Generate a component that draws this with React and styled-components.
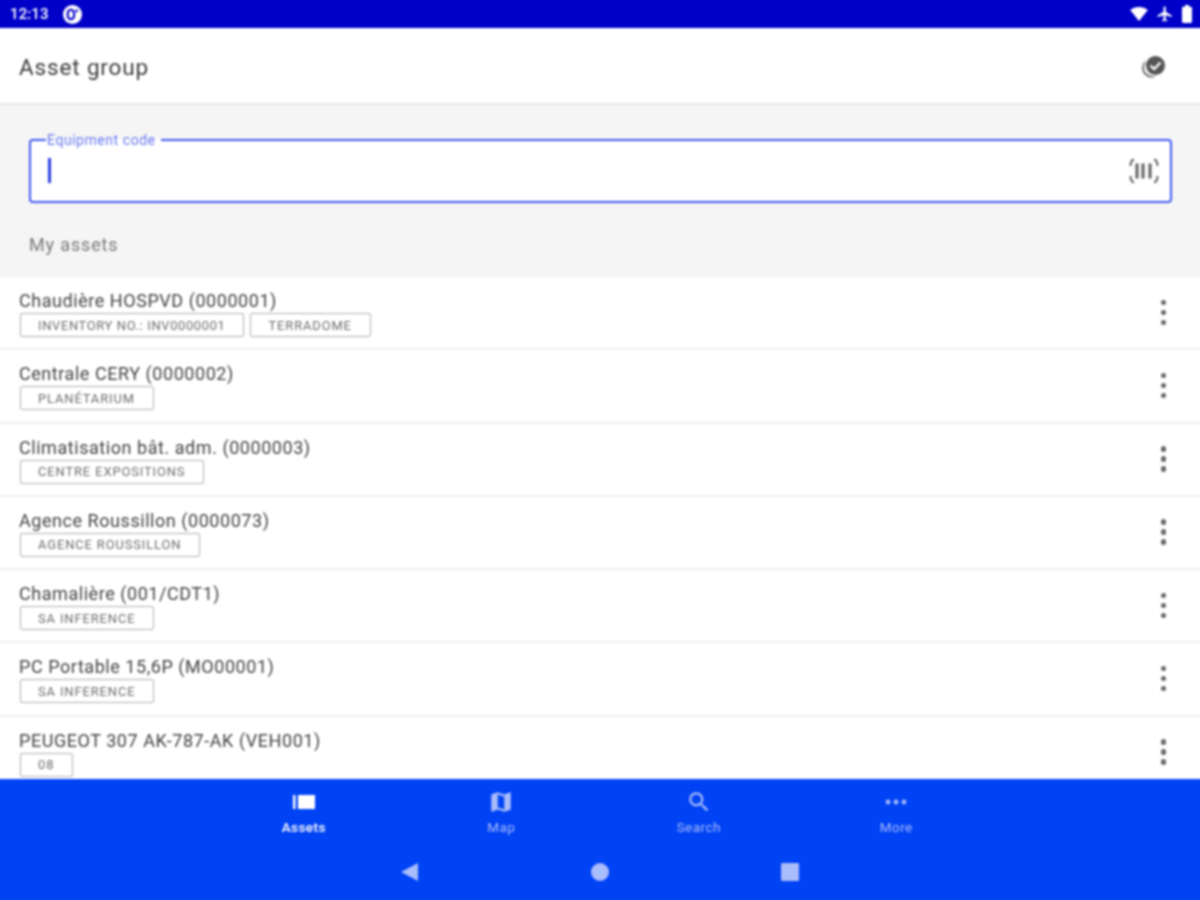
import React from "react";
import styled, { createGlobalStyle } from "styled-components";

const Global = createGlobalStyle`
  html, body { margin: 0; padding: 0; background: #fff; overflow: hidden; height: 100%; }
  body { font-family: Roboto, "Liberation Sans", sans-serif; }
  * { box-sizing: border-box; }
`;

/* The screen bleeds 8px past the window on every side so the soft focus never fades at the edges. */
const Screen = styled.div`
  width: 1216px;
  height: 916px;
  margin: -8px;
  display: flex;
  flex-direction: column;
  overflow: hidden;
  background: #fff;
  filter: blur(0.9px);
`;

const StatusBar = styled.div`
  height: 36px;
  flex: none;
  background: #0000c8;
  color: #fff;
  display: flex;
  align-items: center;
  padding: 8px 16px 0 18px;
`;
const Time = styled.span`
  font-size: 15px;
  font-weight: 500;
  letter-spacing: 0.1px;
`;
const Notice = styled.svg`
  width: 19px;
  height: 19px;
  margin-left: 14px;
`;
const StatusIcons = styled.div`
  margin-left: auto;
  display: flex;
  align-items: center;
  gap: 8px;
`;

const Header = styled.header`
  height: 77px;
  flex: none;
  background: #fff;
  border-bottom: 2px solid #e6e6e6;
  display: flex;
  align-items: center;
  justify-content: space-between;
  padding: 2px 41px 0 27px;
`;
const Title = styled.h1`
  margin: 0;
  font-size: 22.5px;
  font-weight: 400;
  letter-spacing: 0.85px;
  color: #3c3c3c;
`;

const SearchArea = styled.section`
  height: 172px;
  flex: none;
  background: #f5f5f5;
  padding: 0 36px 0 37px;
  display: flex;
  flex-direction: column;
`;
const Field = styled.fieldset`
  margin: 26px 0 0;
  padding: 0 11px 0 17px;
  height: 72px;
  border: 2px solid #4058f0;
  border-radius: 4px;
  background: #fff;
`;
const Legend = styled.legend`
  padding: 2px 5px 0 1px;
  margin-left: -2px;
  font-size: 14px;
  line-height: 15px;
  letter-spacing: 0.55px;
  color: #6578f0;
`;
const FieldBody = styled.div`
  height: 47px;
  margin-top: -1px;
  display: flex;
  align-items: center;
  justify-content: space-between;
`;
const Caret = styled.span`
  display: block;
  width: 3px;
  height: 25px;
  background: #2a3fe0;
`;
const ScanIcon = styled.svg`
  width: 30px;
  height: 26px;
`;
const SectionLabel = styled.div`
  margin-top: 31px;
  font-size: 18px;
  letter-spacing: 0.85px;
  color: #787878;
`;

const List = styled.main`
  flex: 1;
  min-height: 0;
  overflow: hidden;
  background: #fff;
`;
const Row = styled.article`
  height: 73.3px;
  border-bottom: 2px solid #efefef;
  display: flex;
  align-items: flex-start;
  justify-content: space-between;
  padding: 13px 42px 0 27px;
`;
const RowText = styled.div`
  display: flex;
  flex-direction: column;
`;
const RowTitle = styled.div`
  font-size: 18px;
  line-height: 21px;
  letter-spacing: 0.55px;
  color: #444;
`;
const Chips = styled.div`
  display: flex;
  gap: 6px;
  margin: 2px 0 0 1px;
`;
const Chip = styled.span`
  height: 24px;
  border: 1.5px solid #b0b0b0;
  border-radius: 2px;
  padding: 0 18px 0 17px;
  display: flex;
  align-items: center;
  font-size: 12.9px;
  letter-spacing: ${(p) => (p.$tight ? "0.66px" : "0.9px")};
  color: #6c6c6c;
  white-space: nowrap;
`;
const Kebab = styled.div`
  margin-top: 9.5px;
  display: flex;
  flex-direction: column;
  gap: 4.5px;
`;
const Dot = styled.span`
  width: 5.5px;
  height: 5.5px;
  border-radius: 50%;
  background: #666;
`;

const Bottom = styled.footer`
  height: 129px;
  flex: none;
  background: #0043f5;
  display: flex;
  flex-direction: column;
  align-items: center;
`;
const Tabs = styled.nav`
  width: 790px;
  display: grid;
  grid-template-columns: repeat(4, 1fr);
  padding-top: 10px;
`;
const Tab = styled.div`
  display: flex;
  flex-direction: column;
  align-items: center;
  gap: 4px;
  color: ${(p) => (p.$active ? "#ffffff" : "#a9bcfb")};
  font-size: 13.5px;
  font-weight: ${(p) => (p.$active ? 500 : 400)};
  letter-spacing: 0.45px;
  line-height: 16px;
`;
const TabIcon = styled.svg`
  width: 26px;
  height: 26px;
  fill: currentColor;
`;
const SysNav = styled.div`
  width: 400px;
  margin-top: 27px;
  display: flex;
  justify-content: space-between;
  align-items: center;
  color: #a9bcfb;
`;
const SysIcon = styled.svg`
  width: 20px;
  height: 20px;
  fill: currentColor;
`;

const rows = [
  ["Chaudière HOSPVD (0000001)", ["INVENTORY NO.: INV0000001", "TERRADOME"]],
  ["Centrale CERY (0000002)", ["PLANÉTARIUM"]],
  ["Climatisation bât. adm. (0000003)", ["CENTRE EXPOSITIONS"]],
  ["Agence Roussillon (0000073)", ["AGENCE ROUSSILLON"]],
  ["Chamalière (001/CDT1)", ["SA INFERENCE"]],
  ["PC Portable 15,6P (MO00001)", ["SA INFERENCE"]],
  ["PEUGEOT 307 AK-787-AK (VEH001)", ["08"]],
];

export default function App() {
  return (
    <Screen>
      <Global />
      <StatusBar>
        <Time>12:13</Time>
        <Notice viewBox="0 0 18 18">
          <circle cx="9" cy="9" r="9" fill="#fff" />
          <rect x="4.5" y="4.5" width="6" height="9" rx="3" fill="none" stroke="#0000c8" strokeWidth="2" />
          <circle cx="13" cy="5.5" r="1.3" fill="#0000c8" />
        </Notice>
        <StatusIcons>
          <svg width="18" height="14" viewBox="0 0 24 19" fill="#fff">
            <path d="M12 19 24 4C20.6 1.4 16.5 0 12 0S3.4 1.4 0 4z" />
          </svg>
          <svg width="18" height="18" viewBox="0 0 24 24" fill="#fff">
            <path d="M21 16v-2l-8-5V3.5c0-.83-.67-1.5-1.5-1.5S10 2.67 10 3.5V9l-8 5v2l8-2.5V19l-2 1.5V22l3.5-1 3.5 1v-1.5L13 19v-5.5l8 2.5z" />
          </svg>
          <svg width="10" height="18" viewBox="7 2 10 20" preserveAspectRatio="none" fill="#fff">
            <path d="M15.67 4H14V2h-4v2H8.33C7.6 4 7 4.6 7 5.33v15.33C7 21.4 7.6 22 8.33 22h7.33c.74 0 1.34-.6 1.34-1.33V5.33C17 4.6 16.4 4 15.67 4z" />
          </svg>
        </StatusIcons>
      </StatusBar>

      <Header>
        <Title>Asset group</Title>
        <svg width="26" height="24" viewBox="0 0 26 24">
          <circle cx="10.5" cy="13" r="8.5" fill="none" stroke="#666" strokeWidth="1.8" />
          <circle cx="14.5" cy="10.5" r="11" fill="#fff" />
          <circle cx="14.5" cy="10.5" r="9.5" fill="#555" />
          <path d="M9.5 10.5l3.6 3.6 6.4-6.6" fill="none" stroke="#fff" strokeWidth="2.2" />
        </svg>
      </Header>

      <SearchArea>
        <Field>
          <Legend>Equipment code</Legend>
          <FieldBody>
            <Caret />
            <ScanIcon viewBox="0 0 30 26" fill="none" stroke="#606060" strokeWidth="2">
              <path d="M5 1.5C3 2 1.5 3 1.5 8M25 1.5C27 2 28.5 3 28.5 8M1.5 18C1.5 23 3 24 5 24.5M28.5 18C28.5 23 27 24 25 24.5" />
              <path d="M8 5.5v15M14 5.5v15M21 5.5v15" strokeWidth="3" />
            </ScanIcon>
          </FieldBody>
        </Field>
        <SectionLabel>My assets</SectionLabel>
      </SearchArea>

      <List>
        {rows.map(([title, chips]) => (
          <Row key={title}>
            <RowText>
              <RowTitle>{title}</RowTitle>
              <Chips>
                {chips.map((c) => (
                  <Chip key={c} $tight={/\d{3}/.test(c)}>{c}</Chip>
                ))}
              </Chips>
            </RowText>
            <Kebab>
              <Dot />
              <Dot />
              <Dot />
            </Kebab>
          </Row>
        ))}
      </List>

      <Bottom>
        <Tabs>
          <Tab $active>
            <TabIcon viewBox="0 0 26 26">
              <path d="M2 6h2.5v14H2zM7 6h17v14H7z" />
            </TabIcon>
            Assets
          </Tab>
          <Tab>
            <TabIcon viewBox="0 0 24 24">
              <path d="M20.5 3l-.16.03L15 5.1 9 3 3.36 4.9c-.21.07-.36.25-.36.48V20.5c0 .28.22.5.5.5l.16-.03L9 18.9l6 2.1 5.64-1.9c.21-.07.36-.25.36-.48V3.5c0-.28-.22-.5-.5-.5zM15 19l-6-2.11V5l6 2.11V19z" />
            </TabIcon>
            Map
          </Tab>
          <Tab>
            <TabIcon viewBox="0 0 24 24">
              <path d="M15.5 14h-.79l-.28-.27C15.41 12.59 16 11.11 16 9.5 16 5.91 13.09 3 9.5 3S3 5.91 3 9.5 5.91 16 9.5 16c1.61 0 3.09-.59 4.23-1.57l.27.28v.79l5 4.99L20.49 19l-4.99-5zm-6 0C7.01 14 5 11.99 5 9.5S7.01 5 9.5 5 14 7.01 14 9.5 11.99 14 9.5 14z" />
            </TabIcon>
            Search
          </Tab>
          <Tab>
            <TabIcon viewBox="0 0 26 26">
              <circle cx="5" cy="13" r="2.4" />
              <circle cx="13" cy="13" r="2.4" />
              <circle cx="21" cy="13" r="2.4" />
            </TabIcon>
            More
          </Tab>
        </Tabs>
        <SysNav>
          <SysIcon viewBox="0 0 20 20">
            <path d="M18 1v18L1 10z" />
          </SysIcon>
          <SysIcon viewBox="0 0 20 20">
            <circle cx="10" cy="10" r="9" />
          </SysIcon>
          <SysIcon viewBox="0 0 20 20">
            <rect x="1" y="1" width="18" height="18" rx="1" />
          </SysIcon>
        </SysNav>
      </Bottom>
    </Screen>
  );
}
